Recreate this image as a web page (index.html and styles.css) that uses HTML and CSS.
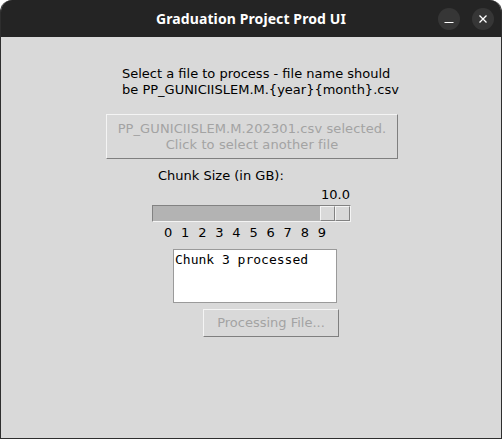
FILE: index.html
```html
<!DOCTYPE html>
<html>
<head>
<meta charset="utf-8">
<link rel="stylesheet" href="styles.css">
</head>
<body>
<div class="window">
  <div class="titlebar">
    <div class="title">Graduation Project Prod UI</div>
    <div class="controls">
      <div class="ctl"><svg width="22" height="22" viewBox="0 0 22 22"><line x1="6.5" y1="14.5" x2="15.5" y2="14.5" stroke="#fff" stroke-width="1.2"/></svg></div>
      <div class="ctl"><svg width="22" height="22" viewBox="0 0 22 22"><path d="M7.5 7.5 L14.5 14.5 M14.5 7.5 L7.5 14.5" stroke="#fff" stroke-width="1.3"/></svg></div>
    </div>
  </div>
  <div class="content">
    <div class="prompt">Select a file to process - file name should<br>be PP_GUNICIISLEM.M.{year}{month}.csv</div>
    <div class="filebtn">PP_GUNICIISLEM.M.202301.csv selected.<br>Click to select another file</div>
    <div class="chunklabel">Chunk Size (in GB):</div>
    <div class="scale">
      <div class="value">10.0</div>
      <div class="trough">
        <div class="slider"><span class="half"></span><span class="half"></span></div>
      </div>
      <div class="ticks"><span>0</span><span>1</span><span>2</span><span>3</span><span>4</span><span>5</span><span>6</span><span>7</span><span>8</span><span>9</span></div>
    </div>
    <div class="log">Chunk 3 processed</div>
    <div class="procbtn">Processing File...</div>
  </div>
</div>
</body>
</html>
```
FILE: styles.css
```css
html, body {
  margin: 0;
  padding: 0;
  background: #ffffff;
}
body {
  width: 502px;
  height: 439px;
  overflow: hidden;
  font-family: "DejaVu Sans", sans-serif;
}
.window {
  width: 502px;
  height: 439px;
  box-sizing: border-box;
  background: #d9d9d9;
  border: 1px solid #2e2e2e;
  border-top: none;
  border-radius: 12px 12px 0 0;
  overflow: hidden;
  display: flex;
  flex-direction: column;
}
.titlebar {
  height: 37px;
  flex: none;
  background: #242424;
  position: relative;
  display: flex;
  align-items: center;
  justify-content: center;
}
.title {
  color: #ffffff;
  font-family: "Noto Sans", sans-serif;
  font-weight: bold;
  font-size: 14px;
  letter-spacing: 0.1px;
}
.controls {
  position: absolute;
  right: 7px;
  top: 8px;
  display: flex;
  gap: 12px;
}
.ctl {
  width: 22px;
  height: 22px;
  border-radius: 50%;
  background: #363636;
}
.ctl svg { display: block; }
.content {
  display: flex;
  flex-direction: column;
  align-items: flex-start;
  font-size: 13px;
  color: #000;
}
.prompt {
  margin: 29px 0 0 121px;
  line-height: 16px;
  font-size: 13px;
}
.filebtn {
  margin: 16px 0 0 105px;
  width: 292px;
  height: 45px;
  box-sizing: border-box;
  border: 1px solid;
  border-color: #f4f4f4 #7f7f7f #7f7f7f #f4f4f4;
  color: #a3a3a3;
  text-align: center;
  line-height: 16px;
  padding-top: 6px;
  letter-spacing: 0.1px;
}
.chunklabel {
  margin: 9px 0 0 157px;
  line-height: 16px;
}
.scale {
  margin: 3px 0 0 151px;
  width: 199px;
}
.value {
  text-align: right;
  line-height: 16px;
  height: 16px;
  padding-right: 1px;
}
.trough {
  margin-top: 2px;
  height: 17px;
  box-sizing: border-box;
  background: #b3b3b3;
  border: 1px solid;
  border-color: #828282 #f4f4f4 #f4f4f4 #828282;
  display: flex;
  justify-content: flex-end;
}
.slider {
  display: flex;
  height: 15px;
}
.half {
  width: 15px;
  height: 15px;
  box-sizing: border-box;
  background: #d9d9d9;
  border: 1px solid;
  border-color: #f4f4f4 #828282 #828282 #f4f4f4;
}
.ticks {
  display: flex;
  gap: 8.8px;
  margin: 3px 0 0 12px;
  line-height: 16px;
}
.log {
  margin: 8px 0 0 172px;
  width: 164px;
  height: 54px;
  box-sizing: border-box;
  background: #ffffff;
  border: 1px solid #9a9a9a;
  font-family: "DejaVu Sans Mono", monospace;
  font-size: 13px;
  line-height: 16px;
  padding: 2px 1px;
}
.procbtn {
  margin: 6px 0 0 202px;
  width: 136px;
  height: 28px;
  box-sizing: border-box;
  border: 1px solid;
  border-color: #f4f4f4 #7f7f7f #7f7f7f #f4f4f4;
  color: #a3a3a3;
  text-align: center;
  line-height: 26px;
}
```
